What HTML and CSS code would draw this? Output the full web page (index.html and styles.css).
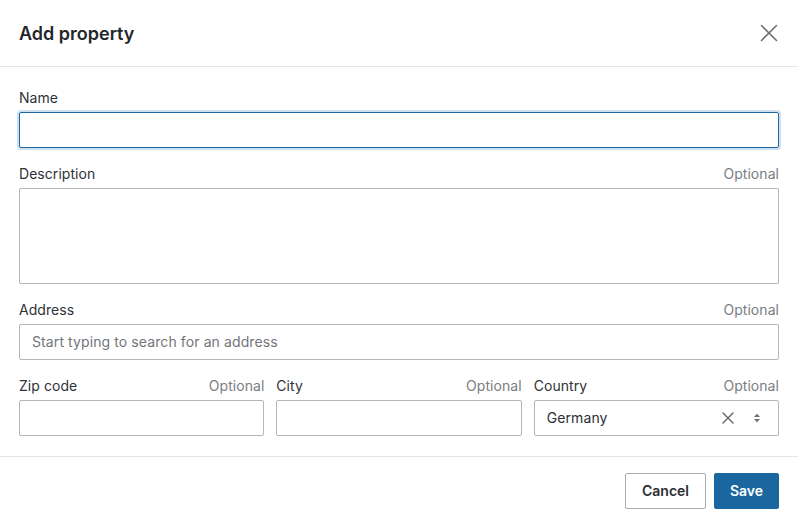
FILE: index.html
```html
<!DOCTYPE html>
<html>
<head>
<meta charset="utf-8">
<link rel="stylesheet" href="styles.css">
</head>
<body>
<div class="dialog">
  <header class="head">
    <h1 class="title">Add property</h1>
    <button class="close" aria-label="Close">
      <svg width="18" height="18" viewBox="0 0 18 18"><path d="M1.5 1.5L16.5 16.5M16.5 1.5L1.5 16.5" stroke="#6b6e72" stroke-width="1.6" stroke-linecap="round"/></svg>
    </button>
  </header>
  <div class="body">
    <div class="field">
      <div class="lab"><span>Name</span></div>
      <div class="input focus"></div>
    </div>
    <div class="field">
      <div class="lab"><span>Description</span><span class="opt">Optional</span></div>
      <div class="input area"></div>
    </div>
    <div class="field">
      <div class="lab"><span>Address</span><span class="opt">Optional</span></div>
      <div class="input"><span class="ph">Start typing to search for an address</span></div>
    </div>
    <div class="row">
      <div class="field">
        <div class="lab"><span>Zip code</span><span class="opt">Optional</span></div>
        <div class="input"></div>
      </div>
      <div class="field">
        <div class="lab"><span>City</span><span class="opt">Optional</span></div>
        <div class="input"></div>
      </div>
      <div class="field">
        <div class="lab"><span>Country</span><span class="opt">Optional</span></div>
        <div class="input select">
          <span class="val">Germany</span>
          <svg class="clr" width="12" height="12" viewBox="0 0 12 12"><path d="M1 1L11 11M11 1L1 11" stroke="#5f6368" stroke-width="1.4" stroke-linecap="round"/></svg>
          <svg class="arr" width="8" height="12" viewBox="0 0 8 12"><path d="M1 5L4 1.8L7 5Z M1 7L4 10.2L7 7Z" fill="#6b6e72"/></svg>
        </div>
      </div>
    </div>
  </div>
  <footer class="foot">
    <button class="btn cancel">Cancel</button>
    <button class="btn save">Save</button>
  </footer>
</div>
</body>
</html>
```
FILE: styles.css
```css
* { box-sizing: border-box; }
html, body { margin: 0; padding: 0; background: #fff; }
body { font-family: Inter, "Noto Sans", sans-serif; color: #2b2e33; }
.dialog { width: 798px; height: 524px; display: flex; flex-direction: column; }
.head { height: 67px; border-bottom: 1px solid #e4e5e7; display: flex; align-items: center; justify-content: space-between; padding: 0 20px 0 19px; }
.title { margin: 0; font-size: 18px; font-weight: 600; color: #23262a; letter-spacing: 0; }
.close { border: 0; background: none; padding: 0; width: 18px; height: 18px; display: flex; cursor: pointer; }
.body { padding: 21px 19px 20px 19px; display: flex; flex-direction: column; gap: 16px; border-bottom: 1px solid #e4e5e7; }
.field { display: flex; flex-direction: column; gap: 4px; min-width: 0; }
.lab { display: flex; justify-content: space-between; font-size: 14px; line-height: 20px; color: #2f3237; letter-spacing: 0.05px; }
.opt { color: #7a7d82; }
.input { height: 36px; border: 1px solid #b3b6ba; border-radius: 2px; display: flex; align-items: center; padding: 0 12px 1px 12px; font-size: 14px; letter-spacing: 0.1px; }
.input.focus { border-color: #1c68a6; box-shadow: 0 0 0 2px #cfe1f1; }
.input.area { height: 96px; }
.ph { color: #72767b; }
.row { display: grid; grid-template-columns: 1fr 1fr 1fr; gap: 12px; }
.val { flex: 1; color: #2b2e33; }
.clr { margin-right: 19px; margin-top: 1px; }
.arr { margin-right: 5px; margin-top: 1px; }
.foot { flex: 1; display: flex; justify-content: flex-end; align-items: flex-start; gap: 8px; padding: 16px 19px 0 0; }
.btn { height: 36px; font-family: Inter, "Noto Sans", sans-serif; font-size: 14px; font-weight: 600; border-radius: 2px; cursor: pointer; padding: 0 0 1px 0; }
.cancel { width: 81px; background: #fff; border: 1px solid #a9acb0; color: #2b2e33; }
.save { width: 65px; background: #1a67a0; border: 1px solid #1a67a0; color: #fff; }
```
